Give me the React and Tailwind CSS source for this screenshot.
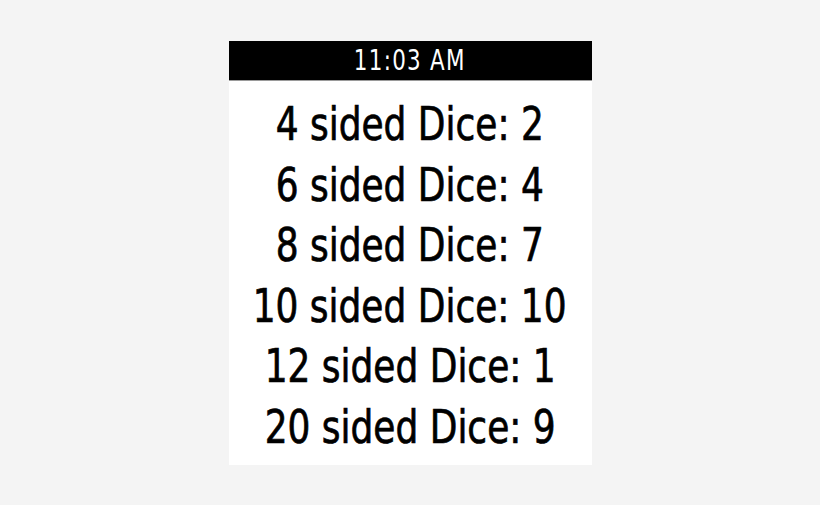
const ROLLS = [
  { sides: 4, value: 2 },
  { sides: 6, value: 4 },
  { sides: 8, value: 7 },
  { sides: 10, value: 10 },
  { sides: 12, value: 1 },
  { sides: 20, value: 9 },
];

const FONT = '"DejaVu Sans Condensed", "DejaVu Sans", sans-serif';

export default function App() {
  return (
    <div className="w-[820px] h-[505px] bg-[#f4f4f4] flex justify-center pt-[41px]">
      <div className="w-[363px] h-[424px] bg-white flex flex-col">
        {/* status bar */}
        <div className="h-[40px] bg-black border-b border-[#9a9a9a] flex items-center justify-center">
          <span
            className="text-white text-[28px] leading-none tracking-[1.5px] scale-x-[0.85]"
            style={{ fontFamily: FONT }}
          >
            11:03 AM
          </span>
        </div>

        <div className="flex flex-col items-center pt-[13px]">
          {ROLLS.map(r => (
            <p
              key={r.sides}
              className="text-black text-[47px] leading-[60.6px] whitespace-nowrap scale-x-[0.85] [-webkit-text-stroke:0.7px_black]"
              style={{ fontFamily: FONT }}
            >
              {r.sides} sided Dice: {r.value}
            </p>
          ))}
        </div>
      </div>
    </div>
  );
}
